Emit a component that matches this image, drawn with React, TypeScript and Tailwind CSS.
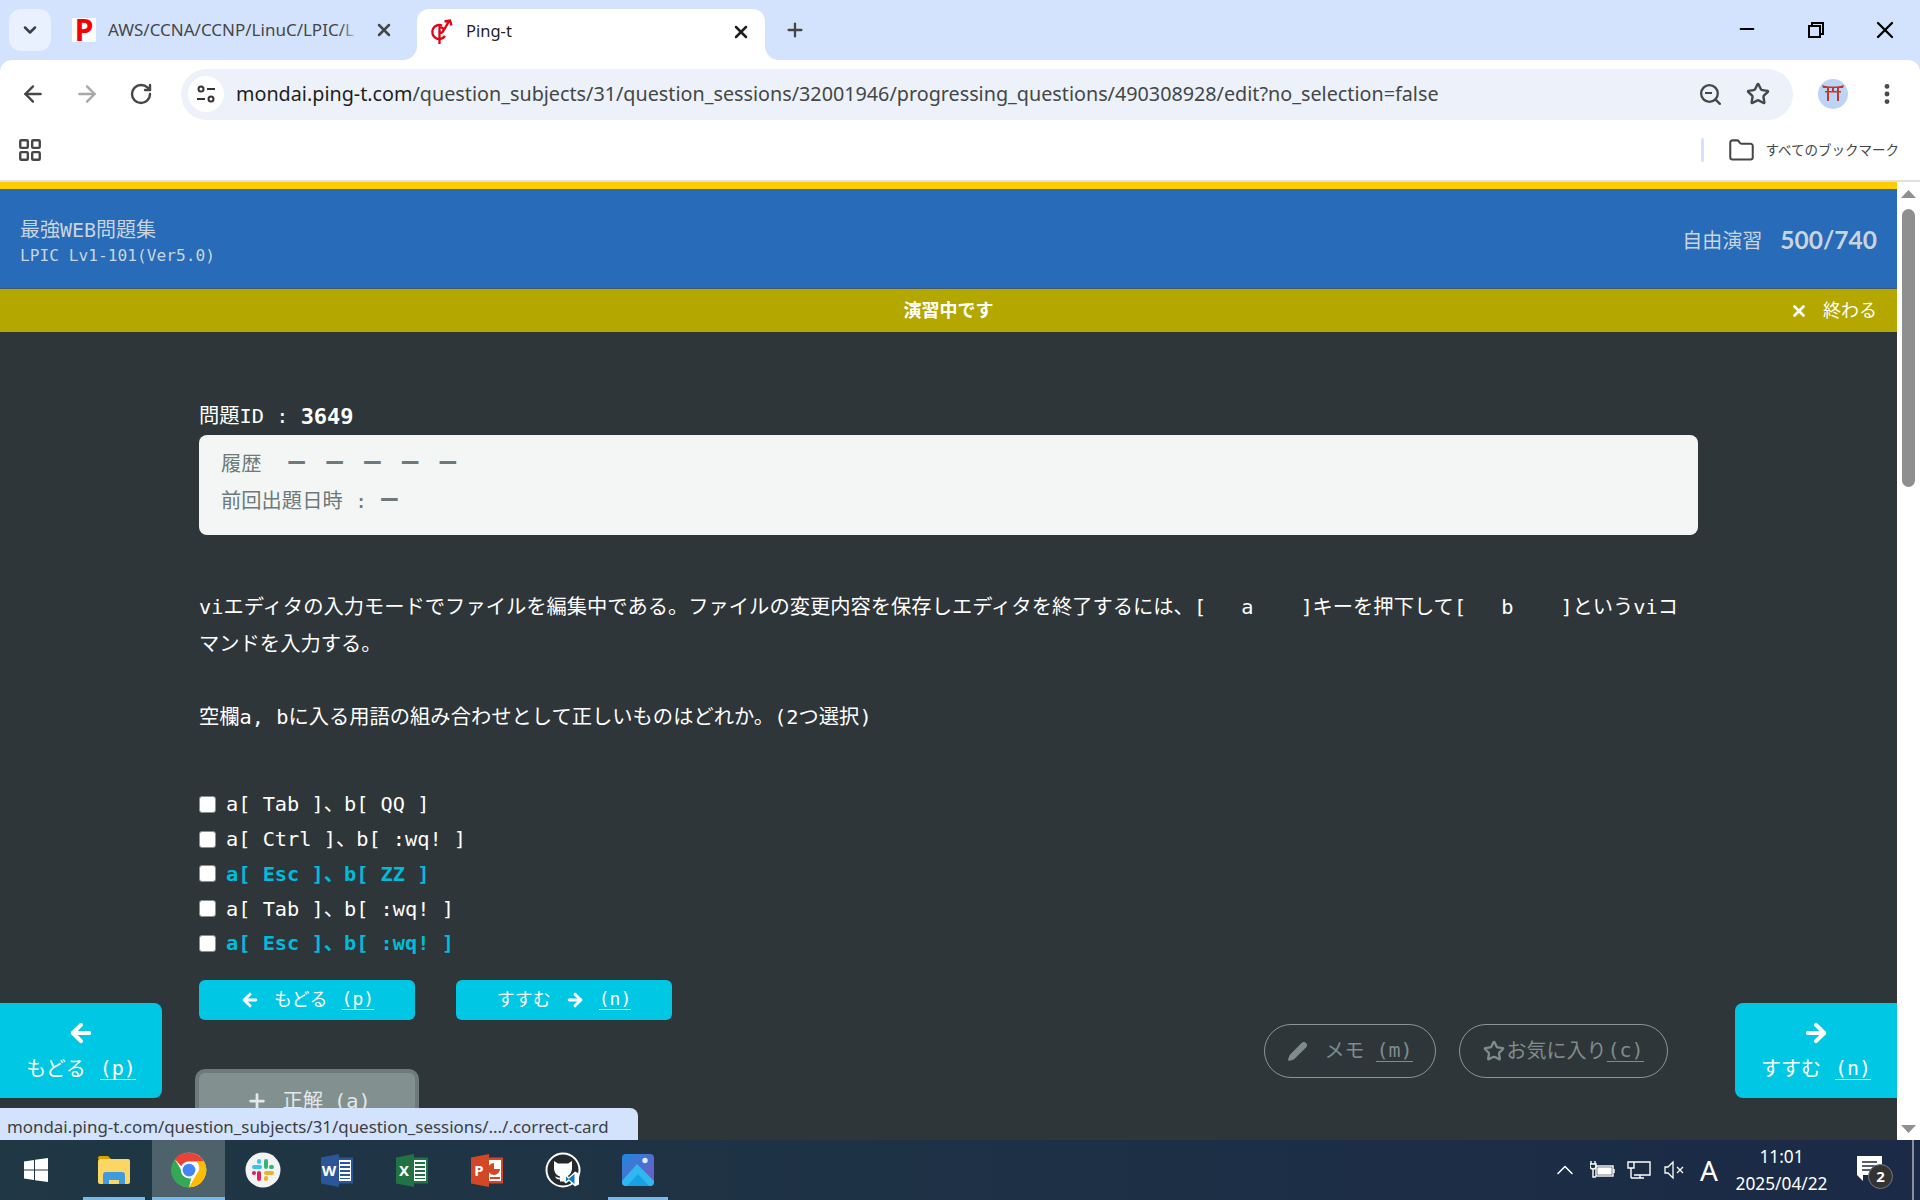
import React from 'react';
import {
  ArrowLeft, ArrowRight, ChevronDown, ChevronUp, Folder, LayoutGrid, MoreVertical, Pencil, Plus, RotateCw,
  Search, Star, X, Minus,
} from 'lucide-react';

const mono = "font-['DejaVu_Sans_Mono','Noto_Sans_CJK_JP',monospace]";
const ui = "font-['Noto_Sans','Noto_Sans_CJK_JP',sans-serif]";

const options = [
  { label: 'a[ Tab ]、b[ QQ ]', hit: false },
  { label: 'a[ Ctrl ]、b[ :wq! ]', hit: false },
  { label: 'a[ Esc ]、b[ ZZ ]', hit: true },
  { label: 'a[ Tab ]、b[ :wq! ]', hit: false },
  { label: 'a[ Esc ]、b[ :wq! ]', hit: true },
];

const ChromeLogo = () => (
  <svg width="36" height="36" viewBox="0 0 48 48">
    <circle cx="24" cy="24" r="23" fill="#fff" />
    <path d="M24 1a23 23 0 0 1 20 11.5H24a11.5 11.5 0 0 0-10.4 6.6L5.1 9.5A23 23 0 0 1 24 1z" fill="#ea4335" />
    <path d="M44 12.5A23 23 0 0 1 24 47l10-17.4a11.5 11.5 0 0 0-.3-17.1z" fill="#fbbc04" />
    <path d="M24 47A23 23 0 0 1 5.100 9.500L14 24.800A11.500 11.500 0 0 0 27 35.100z" fill="#34a853" />
    <circle cx="24" cy="24" r="11" fill="#fff" />
    <circle cx="24" cy="24" r="8.500" fill="#4285f4" />
  </svg>
);

const SlackLogo = () => (
  <svg width="36" height="36" viewBox="0 0 36 36">
    <circle cx="18" cy="18" r="17.500" fill="#f3f3f3" />
    <rect x="7" y="13" width="10" height="4" rx="2" fill="#36c5f0" />
    <rect x="12" y="7" width="4" height="5" rx="2" fill="#36c5f0" />
    <rect x="19" y="7" width="4" height="10" rx="2" fill="#2eb67d" />
    <rect x="24" y="13" width="5" height="4" rx="2" fill="#2eb67d" />
    <rect x="19" y="19" width="10" height="4" rx="2" fill="#ecb22e" />
    <rect x="19" y="24" width="4" height="5" rx="2" fill="#ecb22e" />
    <rect x="12" y="19" width="4" height="10" rx="2" fill="#e01e5a" />
    <rect x="7" y="19" width="4" height="4" rx="2" fill="#e01e5a" />
  </svg>
);

// word / excel / powerpoint share the same shape
const OfficeLogo = ({ letter, dark, mid, slide }: { letter: string; dark: string; mid: string; slide?: boolean }) => (
  <svg width="33" height="33" viewBox="0 0 33 33">
    <rect x="15" y="3.500" width="17" height="26" fill={mid} />
    <rect x="18" y="6" width="12" height="21" fill="#fff" />
    {slide ? (
      <path d="M23 9a6 6 0 1 0 6 6h-6zM19 23h10v2H19z" fill={mid} />
    ) : (
      <path d="M19 8h10v2H19zM19 12h10v2H19zM19 16h10v2H19zM19 20h10v2H19zM19 24h10v1H19z" fill={mid} />
    )}
    <path d="M0 3.500L18 0v33L0 29.500z" fill={dark} />
    <text x="8" y="22" textAnchor="middle" fontSize="15" fontWeight="700" fill="#fff" fontFamily="Noto Sans">{letter}</text>
  </svg>
);

const GithubVsLogo = () => (
  <svg width="36" height="36" viewBox="0 0 36 36">
    <circle cx="18" cy="18" r="16.500" fill="#24292e" stroke="#fff" strokeWidth="2" />
    <path d="M9 9l4 2.500h10L27 9v7c0 5-3 8-6 8.500v5h-6v-2c-3 0-4-1-5-3 2 0 3 2 5 1v-1c-3-1-6-3.500-6-8.500z" fill="#fff" />
    <path d="M24 25l6-5.500 4 2v11l-4 2-6-5.500-3 2.500-2-1.500v-6l2-1z" fill="#fff" />
    <path d="M29.500 22v10l-6-5zM21 24.500l3 2.500-3 2.500z" fill="#0a7cc4" />
  </svg>
);

const PhotosLogo = () => (
  <svg width="32" height="32" viewBox="0 0 32 32">
    <defs>
      <linearGradient id="ph" x1="0" y1="0" x2="1" y2="1">
        <stop offset="0" stopColor="#1f88df" />
        <stop offset="1" stopColor="#7a55c0" />
      </linearGradient>
    </defs>
    <rect width="32" height="32" rx="4" fill="url(#ph)" />
    <circle cx="23" cy="6.500" r="2.700" fill="#dfe8f6" />
    <path d="M0 27L15 10l17 17v1a4 4 0 0 1-4 4H4a4 4 0 0 1-4-4z" fill="#2fb8f0" />
    <path d="M5 32l11-12 11 12z" fill="#1aa0e4" />
  </svg>
);

const ExplorerLogo = () => (
  <svg width="32" height="30" viewBox="0 0 32 30">
    <path d="M0 3a2 2 0 0 1 2-2h8l3 3h-13z" fill="#d9a400" />
    <rect y="4" width="32" height="25" rx="2" fill="#fbd665" />
    <path d="M5 29v-9a3 3 0 0 1 3-3h16a3 3 0 0 1 3 3v9h-6v-4H11v4z" fill="#3f9be0" />
  </svg>
);

const TaskIcon = ({ children, active, line, wide, width = 'w-[75px]' }: { children: React.ReactNode; active?: boolean; line?: boolean; wide?: boolean; width?: string }) => (
  <div className={`relative flex h-full items-center justify-center ${width} ${active ? 'bg-[#4d626b]' : ''}`}>
    {children}
    {line && <div className={`absolute bottom-0 h-[3px] bg-[#76b9ed] ${wide ? 'inset-x-0' : 'left-[8px] right-[7px]'}`} />}
  </div>
);

const Underlined = ({ children }: { children: React.ReactNode }) => (
  <span className="border-b border-current pb-[1px] leading-none">{children}</span>
);

const SideButton = ({ dir }: { dir: 'left' | 'right' }) => (
  <div className={`absolute top-[821px] flex h-[95px] w-[162px] flex-col items-center justify-center gap-[7px] bg-[#00c7e3] pt-[2px] text-white ${mono} text-[20px] ${dir === 'left' ? 'left-0 rounded-r-lg' : 'left-[1735px] rounded-l-lg'}`}>
    {dir === 'left' ? <ArrowLeft size={28} strokeWidth={3.500} /> : <ArrowRight size={28} strokeWidth={3.500} />}
    <div className="flex items-center gap-[14px]">
      <span>{dir === 'left' ? 'もどる' : 'すすむ'}</span>
      <Underlined>{dir === 'left' ? '(p)' : '(n)'}</Underlined>
    </div>
  </div>
);

export default function App() {
  return (
    <div className="flex h-[1200px] w-[1920px] flex-col overflow-hidden bg-[#d3e3fd]">
      {/* tab strip */}
      <div className={`flex h-[60px] items-start text-[#3c4043] ${ui}`}>
        <div className="ml-[9px] mt-[9px] flex h-[42px] w-[42px] items-center justify-center rounded-[12px] bg-[#e9f0fe]">
          <ChevronDown size={20} strokeWidth={3} />
        </div>
        <div className="ml-[21px] mt-[18px] flex h-[24px] w-[24px] items-center justify-center bg-white text-[30px] font-bold leading-[24px] text-[#f40000]">P</div>
        <div className="relative ml-[12px] mt-[17px] h-[26px] w-[252px] whitespace-nowrap text-[17px] leading-[26px] text-[#444746]">
          AWS/CCNA/CCNP/LinuC/LPIC/L
          <div className="absolute inset-y-0 right-0 w-[20px] bg-gradient-to-r from-transparent to-[#d3e3fd]" />
        </div>
        <X className="ml-[14px] mt-[20px] text-[#444746]" size={20} strokeWidth={3} />
        <div className="relative ml-[23px] mt-[9px] flex h-[51px] w-[348px] items-center rounded-t-[12px] bg-white pb-[6px] pl-[13px]">
          <svg className="absolute bottom-0 left-[-14px]" width="14" height="14" viewBox="0 0 14 14">
            <path d="M14 0v14H0a14 14 0 0 0 14-14z" fill="#fff" />
          </svg>
          <svg className="absolute bottom-0 right-[-14px]" width="14" height="14" viewBox="0 0 14 14">
            <path d="M0 0v14h14A14 14 0 0 1 0 0z" fill="#fff" />
          </svg>
          <svg width="24" height="26" viewBox="0 0 24 26" fill="none" stroke="#e60012" strokeWidth="2.300">
            <path d="M12 6.500A7 7 0 1 0 15 17" />
            <path d="M9.500 5v20M9.500 8.500c3-.5 4.500 1 4 3-.4 1.700-2 2.500-4 2.500M14 11l5-9M14.500 2.500L20 1.500l1.500 5" />
          </svg>
          <span className="ml-[12px] text-[16.500px] text-[#1f1f1f]">Ping-t</span>
          <X className="ml-auto mr-[14px] text-[#1f1f1f]" size={20} strokeWidth={3} />
        </div>
        <Plus className="ml-[19px] mt-[19px] text-[#444746]" size={22} strokeWidth={2.500} />
        <Minus className="ml-auto mt-[18px] text-black" size={22} strokeWidth={2} />
        <svg className="ml-[50px] mt-[22px]" width="16" height="16" viewBox="0 0 16 16" fill="none" stroke="#000" strokeWidth="2">
          <rect x="1" y="4" width="11" height="11" />
          <path d="M4 4V1h11v11h-3" />
        </svg>
        <X className="ml-[47px] mr-[21px] mt-[16px] text-black" size={28} strokeWidth={2} />
      </div>

      {/* toolbar */}
      <div className="flex h-[68px] items-center rounded-t-[12px] bg-white">
        <ArrowLeft className="ml-[20px] text-[#444746]" size={26} strokeWidth={2.200} />
        <ArrowRight className="ml-[28px] text-[#a8a8a8]" size={26} strokeWidth={2.200} />
        <RotateCw className="ml-[29px] text-[#444746]" size={24} strokeWidth={2.400} />
        <div className="ml-[28px] flex h-[51px] w-[1612px] items-center rounded-full bg-[#ecf1fa] pl-[7px]">
          <div className="flex h-[36px] w-[36px] items-center justify-center rounded-full bg-white">
            <svg width="20" height="20" viewBox="0 0 20 20" fill="none" stroke="#333" strokeWidth="2">
              <circle cx="5" cy="5" r="2.500" />
              <circle cx="15" cy="15" r="2.500" />
              <path d="M11 5h8M1 15h8" />
            </svg>
          </div>
          <div className={`ml-[12px] whitespace-nowrap text-[19.750px] text-[#444746] ${ui}`}>
            <span className="text-[#1f1f1f]">mondai.ping-t.com</span>/question_subjects/31/question_sessions/32001946/progressing_questions/490308928/edit?no_selection=false
          </div>
          <div className="ml-auto flex items-center gap-[23px] pr-[23px] text-[#444746]">
            <div className="relative flex">
              <Search size={25} strokeWidth={2.200} />
              <div className="absolute left-[7px] top-[10px] h-[2px] w-[7px] bg-[#444746]" />
            </div>
            <Star size={24} strokeWidth={2.400} />
          </div>
        </div>
        <svg className="ml-[25px]" width="30" height="30" viewBox="0 0 30 30">
          <circle cx="15" cy="15" r="15" fill="#bcd4f5" />
          <path d="M4 6c6 2 16 2 22 0l-1 3H5zM7 12h16v1.500H7zM9 8h2v14H9zM19 8h2v14h-2zM14 8h2v5h-2z" fill="#c0392b" />
        </svg>
        <MoreVertical className="ml-[26px] text-[#444746]" size={26} strokeWidth={2.500} />
      </div>

      {/* bookmarks */}
      <div className="flex h-[54px] items-center border-b-2 border-[#e0e0e0] bg-white pb-[8px] text-[#444746]">
        <LayoutGrid className="ml-[17px]" size={26} strokeWidth={2.200} />
        <div className="ml-auto h-[24px] w-[3px] rounded-full bg-[#d3e3fd]" />
        <Folder className="ml-[24px]" size={27} strokeWidth={1.800} />
        <span className={`ml-[10px] mr-[21px] text-[13.500px] ${ui}`}>すべてのブックマーク</span>
      </div>

      {/* page */}
      <div className="relative flex h-[958px] overflow-hidden">
        <div className="h-full w-[1897px] overflow-hidden bg-[#2f3639]">
          <div className="h-[7px] bg-[#ffcc00]" />
          <div className={`flex h-[100px] items-center justify-between border-b border-[#3f5a70] bg-[#276bb9] pl-[20px] pr-[20px] pt-[4px] text-[#c9d4de] ${mono}`}>
            <div className="pt-[2px]">
              <div className="text-[20px] leading-[28px]">最強WEB問題集</div>
              <div className="text-[16.200px] leading-[24px]">LPIC Lv1-101(Ver5.0)</div>
            </div>
            <div className="flex items-center gap-[18px]">
              <span className={`text-[20px] ${ui}`}>自由演習</span>
              <span className="font-['Lato',sans-serif] text-[24.500px] font-bold">500/740</span>
            </div>
          </div>
          <div className={`relative flex h-[43px] items-center justify-center bg-[#b3a700] text-white ${ui}`}>
            <span className="text-[18px] font-bold">演習中です</span>
            <div className="absolute right-[20px] flex items-center gap-[15px] text-[18px]">
              <X size={18} strokeWidth={3.500} />
              <span>終わる</span>
            </div>
          </div>

          <div className={`pl-[199px] pr-[199px] pt-[65px] text-[20.300px] text-white ${mono}`}>
            <div className="flex h-[38px] items-center whitespace-pre">
              問題ID : <span className="text-[22px] font-bold">3649</span>
            </div>
            <div className="h-[100px] rounded-lg bg-[#f4f6f5] px-[22px] pb-[9px] pt-[11px] text-[#6c7a7a]">
              <div className="flex h-[37px] items-center">
                履歴
                <div className="ml-[25px] flex gap-[17.500px] font-bold">
                  <span>ー</span><span>ー</span><span>ー</span><span>ー</span><span>ー</span>
                </div>
              </div>
              <div className="flex h-[37px] items-center whitespace-pre">
                前回出題日時 : <span className="font-bold">ー</span>
              </div>
            </div>

            <div className="mt-[54px] whitespace-pre leading-[36.500px]">
              viエディタの入力モードでファイルを編集中である。ファイルの変更内容を保存しエディタを終了するには、<span className="tracking-[-0.350px]">[   a    ]</span>キーを押下して<span className="tracking-[-0.350px]">[   b    ]</span>というviコ
              <br />
              マンドを入力する。
              <br />
              <br />
              空欄a, bに入る用語の組み合わせとして正しいものはどれか。(2つ選択)
            </div>

            <div className="mt-[52px]">
              {options.map((o) => (
                <label key={o.label} className={`flex h-[34.800px] items-center gap-[10px] whitespace-pre ${o.hit ? 'font-bold text-[#00bcdc]' : ''}`}>
                  <input type="checkbox" className="h-[17px] w-[17px] appearance-none rounded-[3px] border-[1.500px] border-[#8a8f8f] bg-white" />
                  <span>{o.label}</span>
                </label>
              ))}
            </div>

            <div className="mt-[19px] flex gap-[41px] text-[18px] text-white">
              <div className="flex h-[40px] w-[216px] items-center justify-center gap-[14px] rounded-md bg-[#00c7e3]">
                <ArrowLeft size={20} strokeWidth={3.500} />
                <span>もどる</span>
                <Underlined>(p)</Underlined>
              </div>
              <div className="flex h-[40px] w-[216px] items-center justify-center gap-[14px] rounded-md bg-[#00c7e3]">
                <span>すすむ</span>
                <ArrowRight size={20} strokeWidth={3.500} />
                <Underlined>(n)</Underlined>
              </div>
            </div>

            <div className="-ml-[4px] mt-[49px] flex h-[64px] w-[224px] items-center justify-center rounded-[10px] border-4 border-[#6f7a7a] bg-[#839090] pl-[3px] text-[#e3e8e8]">
              <Plus size={22} strokeWidth={3} />
              <span className="ml-[14px]">正解</span>
              <span className="ml-[11px]">(a)</span>
            </div>
          </div>
        </div>

        {/* scrollbar */}
        <div className="flex w-[23px] flex-col items-center bg-white pt-[8px]">
          <svg width="15" height="8" viewBox="0 0 15 8"><path d="M7.500 0L15 8H0z" fill="#8f8f8f" /></svg>
          <div className="mt-[11px] h-[278px] w-[13px] rounded-full bg-[#8f8f8f]" />
          <svg className="mt-auto mb-[7px]" width="15" height="8" viewBox="0 0 15 8"><path d="M7.500 8L15 0H0z" fill="#8f8f8f" /></svg>
        </div>

        <SideButton dir="left" />
        <SideButton dir="right" />

        {/* memo, favourite */}
        <div className={`absolute left-[1264px] top-[842px] flex gap-[23px] text-[20px] text-[#7f8c8c] ${mono}`}>
          <div className="flex h-[54px] w-[172px] items-center justify-center gap-[12px] rounded-full border border-[#8a9696]">
            <Pencil size={21} fill="currentColor" strokeWidth={1.500} className="mr-[4px]" />
            <span>メモ</span>
            <Underlined>(m)</Underlined>
          </div>
          <div className="flex h-[54px] w-[209px] items-center justify-center gap-[1px] rounded-full border border-[#8a9696]">
            <Star size={22} strokeWidth={2.500} />
            <span>お気に入り</span>
            <Underlined>(c)</Underlined>
          </div>
        </div>

        {/* link preview */}
        <div className={`absolute bottom-0 left-0 flex h-[32px] w-[638px] items-center rounded-tr-lg bg-[#d3e3fd] pl-[7px] pt-[6px] text-[16.900px] text-[#3c4043] ${ui}`}>
          mondai.ping-t.com/question_subjects/31/question_sessions/.../.correct-card
        </div>
      </div>

      {/* taskbar */}
      <div className="flex h-[60px] items-center bg-gradient-to-r from-[#203744] to-[#1b2a46] text-white">
        <TaskIcon>
          <svg className="mr-[3px]" width="24" height="24" viewBox="0 0 24 24" fill="#fff">
            <path d="M0 3.500L10 2v9.500H0zM11 1.800L24 0v11.500H11zM0 12.500h10V22L0 20.500zM11 12.500h13V24l-13-1.800z" />
          </svg>
        </TaskIcon>
        <TaskIcon line width="w-[77px]"><ExplorerLogo /></TaskIcon>
        <TaskIcon active line wide width="w-[73px]"><ChromeLogo /></TaskIcon>
        <TaskIcon><SlackLogo /></TaskIcon>
        <TaskIcon><OfficeLogo letter="W" dark="#2b579a" mid="#2b579a" /></TaskIcon>
        <TaskIcon><OfficeLogo letter="X" dark="#217346" mid="#217346" /></TaskIcon>
        <TaskIcon><OfficeLogo letter="P" dark="#d24726" mid="#d24726" slide /></TaskIcon>
        <TaskIcon><GithubVsLogo /></TaskIcon>
        <TaskIcon line><PhotosLogo /></TaskIcon>

        <div className={`ml-auto flex h-full items-center ${ui}`}>
          <ChevronUp size={28} strokeWidth={1.300} />
          <svg className="ml-[11px]" width="25" height="20" viewBox="0 0 25 20" fill="none" stroke="#fff" strokeWidth="1.400">
            <rect x="6" y="6" width="17" height="10" />
            <rect x="8" y="8" width="13" height="6" fill="#fff" />
            <path d="M24 9v4M1 1v3M5 1v3M0 4h6v2a3 3 0 0 1-6 0zM3 9v8h3" />
          </svg>
          <svg className="ml-[12px]" width="24" height="20" viewBox="0 0 24 20" fill="none" stroke="#fff" strokeWidth="1.400">
            <path d="M4 2h19v13H7M1 2h6v6H1zM4 8v10M4 18h6M13 15v3M9 18h8M4 5h0" />
          </svg>
          <svg className="ml-[13px]" width="21" height="20" viewBox="0 0 21 20" fill="none" stroke="#fff" strokeWidth="1.300">
            <path d="M1 7h3l5-5v16l-5-5H1zM13 7l6 6M19 7l-6 6" />
          </svg>
          <span className="ml-[15px] text-[28px] leading-none">A</span>
          <div className="ml-[16px] flex w-[95px] flex-col items-center text-[17.300px] leading-[27px]">
            <span>11:01</span>
            <span>2025/04/22</span>
          </div>
          <div className="relative ml-[28px] mr-[30px] h-[28px] w-[25px]">
            <svg width="25" height="28" viewBox="0 0 25 28" fill="#fff">
              <path d="M0 0h25v19H8l-2 0v6l-6-6z" />
              <path d="M5 6h15M5 10h15M5 14h10" stroke="#1b2a46" strokeWidth="1.300" />
            </svg>
            <div className="absolute left-[11px] top-[8px] flex h-[25px] w-[25px] items-center justify-center rounded-full border border-[#777] bg-[#333] text-[15px] font-bold">2</div>
          </div>
          <div className="h-full w-[2px] bg-[#8a8f99]" />
          <div className="w-[6px]" />
        </div>
      </div>
    </div>
  );
}
